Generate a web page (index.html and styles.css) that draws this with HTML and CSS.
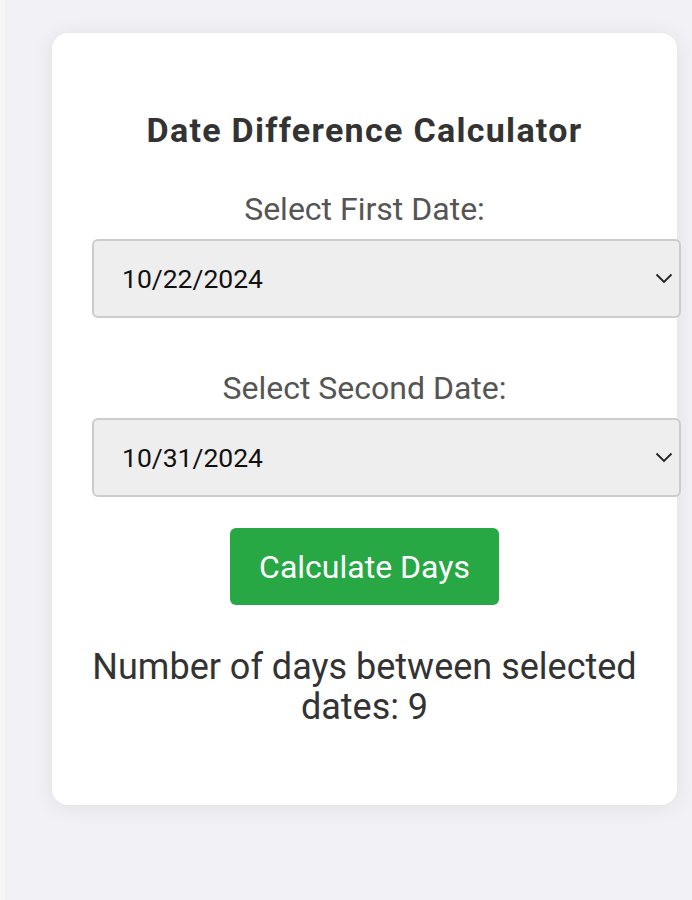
FILE: index.html
```html
<!DOCTYPE html>
<html lang="en">
<head>
<meta charset="utf-8">
<title>Date Difference Calculator</title>
<link rel="stylesheet" href="styles.css">
</head>
<body>
<div class="page">
  <div class="card">
    <h2 class="title">Date Difference Calculator</h2>
    <label class="label" for="d1">Select First Date:</label>
    <div class="select-wrap">
      <select id="d1" class="date-select"><option>10/22/2024</option></select>
      <svg class="chevron" width="18" height="11" viewBox="0 0 18 11"><path d="M1.5 1.5 L9 9 L16.5 1.5" fill="none" stroke="#222" stroke-width="1.8"/></svg>
    </div>
    <label class="label label-second" for="d2">Select Second Date:</label>
    <div class="select-wrap">
      <select id="d2" class="date-select"><option>10/31/2024</option></select>
      <svg class="chevron" width="18" height="11" viewBox="0 0 18 11"><path d="M1.5 1.5 L9 9 L16.5 1.5" fill="none" stroke="#222" stroke-width="1.8"/></svg>
    </div>
    <button class="calc-btn" type="button">Calculate Days</button>
    <p class="result">Number of days between selected dates: 9</p>
  </div>
</div>
</body>
</html>
```

FILE: styles.css
```css
html {
  background: #f6f6f7;
}
body {
  margin: 0;
  font-family: Roboto, "Noto Sans", Arial, sans-serif;
}
.page {
  margin-left: 5px;
  min-height: 900px;
  background: #f2f2f6;
  padding: 33px 15px 0 47px;
  box-sizing: border-box;
}
.card {
  background: #fff;
  border-radius: 16px;
  box-shadow: 0 2px 22px rgba(0, 0, 0, 0.08);
  padding: 77px 40px 78px 40px;
  display: flex;
  flex-direction: column;
  align-items: center;
}
.title {
  margin: 0 0 41px 0;
  font-size: 34px;
  line-height: 40px;
  font-weight: 700;
  letter-spacing: 1.3px;
  color: #333;
  text-align: center;
}
.label {
  display: block;
  font-size: 32px;
  line-height: 36px;
  color: #555;
  margin-bottom: 12px;
  text-align: center;
}
.label-second {
  margin-top: 52px;
}
.select-wrap {
  position: relative;
  align-self: stretch;
  width: calc(100% + 44px);
}
.date-select {
  display: block;
  width: 100%;
  height: 79px;
  box-sizing: border-box;
  appearance: none;
  -webkit-appearance: none;
  background: #eee;
  border: 2px solid #ccc;
  border-radius: 6px;
  padding: 0 20px 0 28px;
  font-family: Roboto, "Noto Sans", Arial, sans-serif;
  font-size: 26.5px;
  color: #111;
}
.chevron {
  position: absolute;
  right: 8px;
  top: 34px;
  pointer-events: none;
}
.calc-btn {
  margin-top: 31px;
  width: 269px;
  height: 77px;
  background: #28a745;
  color: #fff;
  border: none;
  border-radius: 6px;
  font-family: Roboto, "Noto Sans", Arial, sans-serif;
  font-size: 32px;
  padding: 0;
}
.result {
  margin: 42px 0 0 0;
  font-size: 36px;
  line-height: 40px;
  color: #333;
  text-align: center;
}
```
